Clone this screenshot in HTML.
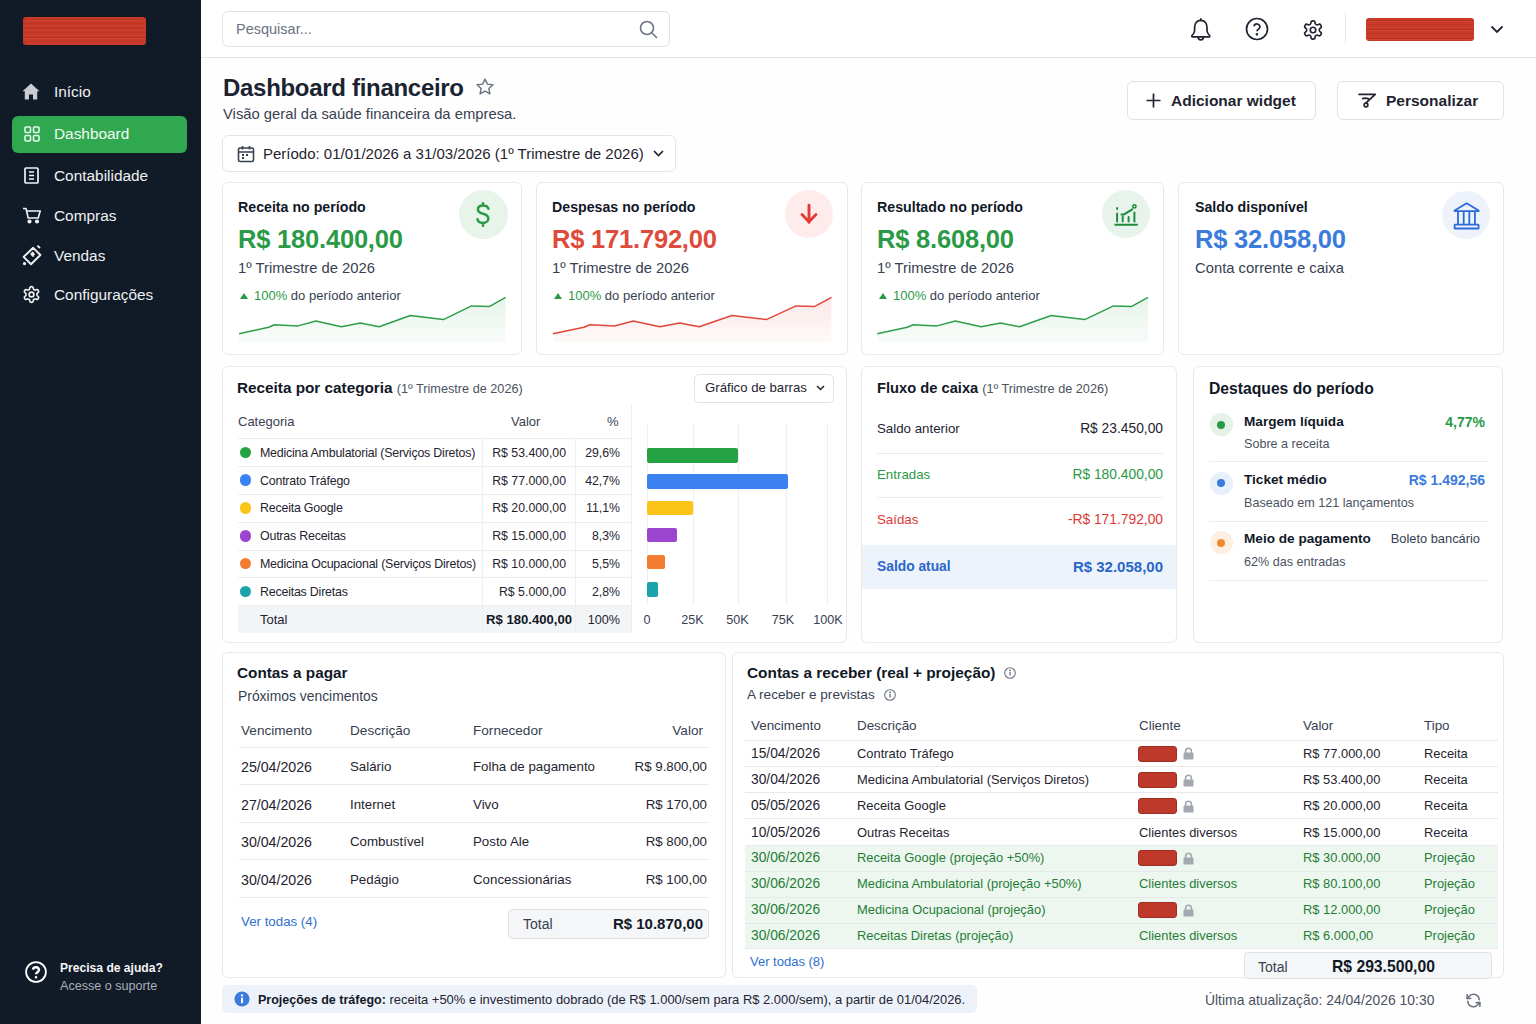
<!DOCTYPE html>
<html><head><meta charset="utf-8">
<style>
*{box-sizing:border-box;margin:0;padding:0}
html,body{width:1536px;height:1024px;overflow:hidden;background:#fefefe;font-family:"Liberation Sans",sans-serif;color:#1f2430}
.a{position:absolute}
.t{position:absolute;white-space:nowrap;line-height:20px}
.b{font-weight:bold}
.card{position:absolute;background:#fff;border:1px solid #e7e8ea;border-radius:6px}
.side{position:absolute;left:0;top:0;width:201px;height:1024px;background:#111a27}
.nav{color:#eef0f3;font-size:15.4px}
.redact{background:repeating-linear-gradient(180deg,#c93b28 0px,#c93b28 1.5px,#b53021 2.5px,#d04530 3.5px,#c23726 4.5px);border-radius:3px}
.rs{border:1px solid #a02d22;border-radius:3px;background:repeating-linear-gradient(180deg,#c23a2a 0px,#b8352a 2px,#c63e2e 3px,#b43327 4px)}
.green{color:#2a9a46}.red{color:#e04a3c}.blue{color:#3a7bdc}
.gray{color:#4b5260}
svg{position:absolute;overflow:visible}
</style></head><body>
<!-- SIDEBAR -->
<div class="side">
  <div class="a redact" style="left:23px;top:17px;width:123px;height:28px"></div>
  <div class="a" style="left:12px;top:116px;width:175px;height:37px;background:#2fa84f;border-radius:6px"></div>
  <!-- icons -->
  <svg style="left:22px;top:83px" width="18" height="17" viewBox="0 0 18 17"><path d="M9 0.5 L17.5 8.2 L15.2 8.2 L15.2 16.5 L11 16.5 L11 11.5 L7 11.5 L7 16.5 L2.8 16.5 L2.8 8.2 L0.5 8.2 Z" fill="#c9ccd3"/></svg>
  <svg style="left:24px;top:126px" width="16" height="16" viewBox="0 0 16 16" fill="none" stroke="#e8f5ea" stroke-width="1.6"><rect x="1" y="1" width="5.5" height="5.5" rx="1"/><rect x="9.5" y="1" width="5.5" height="5.5" rx="1"/><rect x="1" y="9.5" width="5.5" height="5.5" rx="1"/><rect x="9.5" y="9.5" width="5.5" height="5.5" rx="1"/></svg>
  <svg style="left:24px;top:167px" width="15" height="17" viewBox="0 0 15 17" fill="none" stroke="#eef0f3" stroke-width="1.7"><rect x="1" y="1" width="13" height="15" rx="1"/><path d="M5 5h5M5 8.5h5M5 12h5"/></svg>
  <svg style="left:22px;top:207px" width="20" height="17" viewBox="0 0 20 17" fill="none" stroke="#eef0f3" stroke-width="1.6" stroke-linejoin="round"><path d="M1 1.5h3l2.2 9.5h10l2-7H5"/><circle cx="7.5" cy="14.5" r="1.3" fill="#eef0f3"/><circle cx="15" cy="14.5" r="1.3" fill="#eef0f3"/></svg>
  <svg style="left:18px;top:242px" width="30" height="28" viewBox="18 242 30 28" fill="none" stroke="#eef0f3" stroke-width="1.9" stroke-linejoin="round" stroke-linecap="round"><path d="M33.2 247.8L40.4 255L31 264.2L23.6 256.9Z" stroke-linejoin="round"/><path d="M32.5 252.5L34 254.3M31.3 254L33 256"/><path d="M38 246.2L39.5 247.5"/><circle cx="24.5" cy="263.6" r="0.7" fill="#eef0f3"/></svg>
  <svg style="left:22px;top:285px" width="19" height="19" viewBox="0 0 24 24" fill="none" stroke="#eef0f3" stroke-width="2.1"><path d="M12.22 2h-.44a2 2 0 0 0-2 2v.18a2 2 0 0 1-1 1.73l-.43.25a2 2 0 0 1-2 0l-.15-.08a2 2 0 0 0-2.73.73l-.22.38a2 2 0 0 0 .73 2.73l.15.1a2 2 0 0 1 1 1.72v.51a2 2 0 0 1-1 1.74l-.15.09a2 2 0 0 0-.73 2.73l.22.38a2 2 0 0 0 2.73.73l.15-.08a2 2 0 0 1 2 0l.43.25a2 2 0 0 1 1 1.73V20a2 2 0 0 0 2 2h.44a2 2 0 0 0 2-2v-.18a2 2 0 0 1 1-1.73l.43-.25a2 2 0 0 1 2 0l.15.08a2 2 0 0 0 2.73-.73l.22-.39a2 2 0 0 0-.73-2.73l-.15-.08a2 2 0 0 1-1-1.74v-.5a2 2 0 0 1 1-1.74l.15-.09a2 2 0 0 0 .73-2.73l-.22-.38a2 2 0 0 0-2.73-.73l-.15.08a2 2 0 0 1-2 0l-.43-.25a2 2 0 0 1-1-1.73V4a2 2 0 0 0-2-2z"/><circle cx="12" cy="12" r="3"/></svg>
  <div class="t nav" style="left:54px;top:82px">Início</div>
  <div class="t nav" style="left:54px;top:124px;color:#f4fbf5">Dashboard</div>
  <div class="t nav" style="left:54px;top:166px">Contabilidade</div>
  <div class="t nav" style="left:54px;top:206px">Compras</div>
  <div class="t nav" style="left:54px;top:246px">Vendas</div>
  <div class="t nav" style="left:54px;top:285px">Configurações</div>
  <!-- help -->
  <svg style="left:24.5px;top:961px" width="22" height="22" viewBox="0 0 22 22" fill="none" stroke="#fff" stroke-width="1.8"><circle cx="11" cy="11" r="9.9"/><path d="M7.9 8.6a3.1 3.1 0 0 1 6.1.5c0 2-3 2.3-3 4.2" stroke-width="2.4"/><circle cx="11" cy="16.3" r="0.9" fill="#fff" stroke="none"/><circle cx="11" cy="16.3" r="1.2" fill="#fff" stroke="none"/></svg>
  <div class="t b" style="left:60px;top:958px;font-size:12.1px;color:#f3f4f6">Precisa de ajuda?</div>
  <div class="t" style="left:60px;top:976px;font-size:12.6px;color:#a9afb9">Acesse o suporte</div>
</div>
<!-- HEADER -->
<div class="a" style="left:201px;top:0;width:1335px;height:58px;background:#fff;border-bottom:1.5px solid #e3e5e8"></div>
<div class="a" style="left:222px;top:11px;width:448px;height:36px;border:1px solid #dfe2e6;border-radius:6px;background:#fff"></div>
<div class="t" style="left:236px;top:19px;font-size:14.5px;color:#6b7280">Pesquisar...</div>
<svg style="left:639px;top:20px" width="19" height="19" viewBox="0 0 19 19" fill="none" stroke="#6b7280" stroke-width="1.6"><circle cx="8" cy="8" r="6.5"/><path d="M13 13l5 5"/></svg>


<!-- HEADER ICONS -->
<svg style="left:1190px;top:17px" width="22" height="24" viewBox="0 0 22 24" fill="none" stroke="#1f2430" stroke-width="1.7" stroke-linejoin="round" stroke-linecap="round"><path d="M10.8 1.9V3.3"/><path d="M10.8 3.3C6.5 3.3 4.6 6.5 4.6 10.5V13.5C4.6 15.5 3.5 17 2 18.5C1.5 19 1.8 19.8 2.5 19.8H19.1C19.8 19.8 20.1 19 19.6 18.5C18.1 17 17 15.5 17 13.5V10.5C17 6.5 15.1 3.3 10.8 3.3Z"/><path d="M8.2 20.2A2.6 2.6 0 0 0 13.4 20.2"/></svg>
<svg style="left:1245px;top:17px" width="24" height="24" viewBox="0 0 24 24" fill="none" stroke="#1f2430" stroke-width="1.7"><circle cx="12" cy="12" r="10.5"/><path d="M9 9.2a3 3 0 0 1 5.9.7c0 2-3 2.5-3 4.4"/><circle cx="11.9" cy="17.3" r="0.5" fill="#1f2430"/></svg>
<svg style="left:1302px;top:19px" width="22" height="22" viewBox="0 0 24 24" fill="none" stroke="#1f2430" stroke-width="1.8"><path d="M12.22 2h-.44a2 2 0 0 0-2 2v.18a2 2 0 0 1-1 1.73l-.43.25a2 2 0 0 1-2 0l-.15-.08a2 2 0 0 0-2.73.73l-.22.38a2 2 0 0 0 .73 2.73l.15.1a2 2 0 0 1 1 1.72v.51a2 2 0 0 1-1 1.74l-.15.09a2 2 0 0 0-.73 2.73l.22.38a2 2 0 0 0 2.73.73l.15-.08a2 2 0 0 1 2 0l.43.25a2 2 0 0 1 1 1.73V20a2 2 0 0 0 2 2h.44a2 2 0 0 0 2-2v-.18a2 2 0 0 1 1-1.73l.43-.25a2 2 0 0 1 2 0l.15.08a2 2 0 0 0 2.73-.73l.22-.39a2 2 0 0 0-.73-2.73l-.15-.08a2 2 0 0 1-1-1.74v-.5a2 2 0 0 1 1-1.74l.15-.09a2 2 0 0 0 .73-2.73l-.22-.38a2 2 0 0 0-2.73-.73l-.15.08a2 2 0 0 1-2 0l-.43-.25a2 2 0 0 1-1-1.73V4a2 2 0 0 0-2-2z"/><circle cx="12" cy="12" r="3"/></svg>
<div class="a" style="left:1345px;top:13px;width:1px;height:30px;background:#e3e5e8"></div>
<div class="a redact" style="left:1366px;top:18px;width:108px;height:23px"></div>
<svg style="left:1490px;top:25px" width="14" height="9" viewBox="0 0 14 9" fill="none" stroke="#1f2430" stroke-width="1.8"><path d="M1.5 1.5l5.5 5.5 5.5-5.5"/></svg>

<!-- TITLE -->
<div class="t b" style="left:223px;top:77px;font-size:24px;line-height:22px;color:#1b2231;letter-spacing:-0.3px">Dashboard financeiro</div>
<svg style="left:475px;top:77px" width="20" height="20" viewBox="0 0 24 24" fill="none" stroke="#6b7280" stroke-width="1.7" stroke-linejoin="round"><path d="M12 2.5l2.9 6 6.6.8-4.9 4.5 1.3 6.5L12 17l-5.9 3.3 1.3-6.5L2.5 9.3l6.6-.8z"/></svg>
<div class="t" style="left:223px;top:104px;font-size:14.8px;color:#374151">Visão geral da saúde financeira da empresa.</div>
<div class="a" style="left:222px;top:135px;width:454px;height:37px;border:1px solid #e3e5e8;border-radius:6px;background:#fff"></div>
<svg style="left:237px;top:145px" width="18" height="18" viewBox="0 0 18 18" fill="none" stroke="#374151" stroke-width="1.6"><rect x="1.5" y="3" width="15" height="13.5" rx="1.5"/><path d="M1.5 7h15M5.5 1v3.5M12.5 1v3.5"/><path d="M5 10h2M9 10h2M5 13h2" stroke-width="1.8"/></svg>
<div class="t" style="left:263px;top:144px;font-size:15px;color:#1f2430">Período: 01/01/2026 a 31/03/2026 (1º Trimestre de 2026)</div>
<svg style="left:653px;top:150px" width="11" height="7" viewBox="0 0 11 7" fill="none" stroke="#1f2430" stroke-width="1.7"><path d="M1 1l4.5 4.5L10 1"/></svg>

<div class="a" style="left:1127px;top:81px;width:189px;height:39px;border:1px solid #dfe2e6;border-radius:6px;background:#fff"></div>
<svg style="left:1146px;top:93px" width="15" height="15" viewBox="0 0 15 15" fill="none" stroke="#1f2430" stroke-width="1.7"><path d="M7.5 0.5v14M0.5 7.5h14"/></svg>
<div class="t b" style="left:1171px;top:91px;font-size:15.5px;color:#1f2430">Adicionar widget</div>
<div class="a" style="left:1337px;top:81px;width:167px;height:39px;border:1px solid #dfe2e6;border-radius:6px;background:#fff"></div>
<svg style="left:1350px;top:85px" width="35" height="30" viewBox="1350 85 35 30" fill="none" stroke="#1f2430" stroke-width="1.8" stroke-linecap="round" stroke-linejoin="round"><path d="M1359.1 94.4H1375.2L1366 102.8"/><path d="M1362.8 98.6C1364.5 98 1366 98 1368.6 98.8"/><circle cx="1366" cy="105" r="1.9" stroke-width="1.6"/></svg>
<div class="t b" style="left:1386px;top:91px;font-size:15.5px;color:#1f2430">Personalizar</div>
<!-- KPI -->
<div class="card" style="left:222px;top:182px;width:300px;height:173px"></div>
<div class="t b" style="left:238px;top:197px;font-size:14.2px;color:#111827">Receita no período</div>
<div class="t b" style="left:238px;top:228px;font-size:25.5px;line-height:22px;color:#2a9a46;letter-spacing:-0.2px">R$ 180.400,00</div>
<div class="t" style="left:238px;top:258px;font-size:14.8px;color:#374151">1º Trimestre de 2026</div>
<svg style="left:240px;top:293px" width="8" height="6" viewBox="0 0 8 6"><path d="M4 0L8 6H0Z" fill="#2a9a46"/></svg>
<div class="t" style="left:254px;top:286px;font-size:13px;color:#374151"><span style="color:#2a9a46">100%</span> do período anterior</div>
<div class="card" style="left:536px;top:182px;width:312px;height:173px"></div>
<div class="t b" style="left:552px;top:197px;font-size:14.2px;color:#111827">Despesas no período</div>
<div class="t b" style="left:552px;top:228px;font-size:25.5px;line-height:22px;color:#e04a3c;letter-spacing:-0.2px">R$ 171.792,00</div>
<div class="t" style="left:552px;top:258px;font-size:14.8px;color:#374151">1º Trimestre de 2026</div>
<svg style="left:554px;top:293px" width="8" height="6" viewBox="0 0 8 6"><path d="M4 0L8 6H0Z" fill="#2a9a46"/></svg>
<div class="t" style="left:568px;top:286px;font-size:13px;color:#374151"><span style="color:#2a9a46">100%</span> do período anterior</div>
<div class="card" style="left:861px;top:182px;width:303px;height:173px"></div>
<div class="t b" style="left:877px;top:197px;font-size:14.2px;color:#111827">Resultado no período</div>
<div class="t b" style="left:877px;top:228px;font-size:25.5px;line-height:22px;color:#2a9a46;letter-spacing:-0.2px">R$ 8.608,00</div>
<div class="t" style="left:877px;top:258px;font-size:14.8px;color:#374151">1º Trimestre de 2026</div>
<svg style="left:879px;top:293px" width="8" height="6" viewBox="0 0 8 6"><path d="M4 0L8 6H0Z" fill="#2a9a46"/></svg>
<div class="t" style="left:893px;top:286px;font-size:13px;color:#374151"><span style="color:#2a9a46">100%</span> do período anterior</div>
<div class="card" style="left:1178px;top:182px;width:326px;height:173px"></div>
<div class="t b" style="left:1195px;top:197px;font-size:14.2px;color:#111827">Saldo disponível</div>
<div class="t b" style="left:1195px;top:228px;font-size:25.5px;line-height:22px;color:#3a7bdc;letter-spacing:-0.2px">R$ 32.058,00</div>
<div class="t" style="left:1195px;top:258px;font-size:14.8px;color:#374151">Conta corrente e caixa</div>
<div class="a" style="left:459px;top:190px;width:49px;height:49px;border-radius:50%;background:#e7f4ea"></div>
<svg style="left:476px;top:202px" width="14" height="25" viewBox="0 0 14 25" fill="none" stroke="#2a9a46" stroke-width="2.5" stroke-linecap="round"><path d="M12.4 6.8C11.9 4.7 9.9 3.5 7.1 3.5C4 3.5 1.9 5.1 1.9 7.5C1.9 10.1 4.2 11 7 11.7C10 12.4 12.3 13.6 12.3 16.4C12.3 19.1 10 20.9 7 20.9C4.2 20.9 2 19.6 1.5 17.3M7 1.2V3.5M7 20.9V23.8"/></svg>
<div class="a" style="left:785px;top:190px;width:48px;height:48px;border-radius:50%;background:#fdeceb"></div>
<svg style="left:800px;top:203px" width="18" height="22" viewBox="0 0 18 22" fill="none" stroke="#e33b35" stroke-width="2.9" stroke-linecap="round" stroke-linejoin="round"><path d="M9 2.2v17.2M2 11.5L9 18.8l7-7.3"/></svg>
<div class="a" style="left:1102px;top:190px;width:48px;height:48px;border-radius:50%;background:#e8f4eb"></div>
<svg style="left:1100px;top:190px" width="52" height="50" viewBox="1100 190 52 50" fill="none" stroke="#1f8c3d" stroke-width="2" stroke-linecap="round"><path d="M1117.1 213.5V221.5M1122.7 216.5V221.5M1128.6 217V221.5M1134.4 212.5V221.5M1115.3 224.7H1137"/><path d="M1117.1 208V209"/><path d="M1121.5 214.6L1124 214.4L1132.2 209.3"/><circle cx="1134.4" cy="206.4" r="1.6" stroke-width="1.6"/></svg>
<div class="a" style="left:1442px;top:191px;width:48px;height:48px;border-radius:50%;background:#edf2fb"></div>
<svg style="left:1440px;top:190px" width="52" height="50" viewBox="1440 190 52 50" fill="none" stroke="#2f6bd8" stroke-width="1.8" stroke-linejoin="round"><path d="M1466.6 203.3L1478.6 210.6V211.2H1454.6V210.6Z"/><path d="M1458 211.5V224.6M1463.7 211.5V224.6M1469.3 211.5V224.6M1474.9 211.5V224.6"/><rect x="1454.6" y="224.7" width="24" height="3.8" rx="0.6"/></svg>
<svg style="left:237px;top:290px" width="272" height="56" viewBox="0 0 272 56"><defs><linearGradient id="ga" x1="0" y1="0" x2="0" y2="1"><stop offset="0" stop-color="#2e9e4a" stop-opacity="0.12"/><stop offset="1" stop-color="#2e9e4a" stop-opacity="0.03"/></linearGradient></defs><path d="M2.1 43.8 L31.7 37.2 L37.4 34.7 L61.0 35.9 L78.9 31.0 L104.4 36.8 L123.3 32.9 L142.1 36.8 L173.3 25.5 L206.3 29.6 L234.6 15.9 L252.6 16.4 L268.6 7.4 L268.6 52.30000000000001 L2.1 52.30000000000001 Z" fill="url(#ga)"/><path d="M2.1 43.8 L31.7 37.2 L37.4 34.7 L61.0 35.9 L78.9 31.0 L104.4 36.8 L123.3 32.9 L142.1 36.8 L173.3 25.5 L206.3 29.6 L234.6 15.9 L252.6 16.4 L268.6 7.4" fill="none" stroke="#2e9e4a" stroke-width="1.5" stroke-linejoin="round"/></svg>
<svg style="left:551px;top:290px" width="284" height="56" viewBox="0 0 284 56"><defs><linearGradient id="gb" x1="0" y1="0" x2="0" y2="1"><stop offset="0" stop-color="#e0473b" stop-opacity="0.12"/><stop offset="1" stop-color="#e0473b" stop-opacity="0.03"/></linearGradient></defs><path d="M2.0 43.8 L32.9 37.2 L38.9 34.7 L63.6 35.9 L82.3 31.0 L108.9 36.8 L128.7 32.9 L148.3 36.8 L180.9 25.5 L215.4 29.6 L245.0 15.9 L263.8 16.4 L280.5 7.4 L280.5 52.30000000000001 L2.0 52.30000000000001 Z" fill="url(#gb)"/><path d="M2.0 43.8 L32.9 37.2 L38.9 34.7 L63.6 35.9 L82.3 31.0 L108.9 36.8 L128.7 32.9 L148.3 36.8 L180.9 25.5 L215.4 29.6 L245.0 15.9 L263.8 16.4 L280.5 7.4" fill="none" stroke="#e0473b" stroke-width="1.5" stroke-linejoin="round"/></svg>
<svg style="left:875px;top:290px" width="276" height="56" viewBox="0 0 276 56"><defs><linearGradient id="gc" x1="0" y1="0" x2="0" y2="1"><stop offset="0" stop-color="#2e9e4a" stop-opacity="0.12"/><stop offset="1" stop-color="#2e9e4a" stop-opacity="0.03"/></linearGradient></defs><path d="M2.2 43.8 L32.3 37.2 L38.1 34.7 L62.1 35.9 L80.2 31.0 L106.2 36.8 L125.4 32.9 L144.5 36.8 L176.2 25.5 L209.7 29.6 L238.5 15.9 L256.7 16.4 L273.0 7.4 L273.0 52.30000000000001 L2.2 52.30000000000001 Z" fill="url(#gc)"/><path d="M2.2 43.8 L32.3 37.2 L38.1 34.7 L62.1 35.9 L80.2 31.0 L106.2 36.8 L125.4 32.9 L144.5 36.8 L176.2 25.5 L209.7 29.6 L238.5 15.9 L256.7 16.4 L273.0 7.4" fill="none" stroke="#2e9e4a" stroke-width="1.5" stroke-linejoin="round"/></svg>
<!-- ROW2 -->
<div class="card" style="left:222px;top:366px;width:625px;height:277px"></div>
<div class="t b" style="left:237px;top:378.3px;font-size:15.3px;color:#111827">Receita por categoria <span style="font-weight:normal;font-size:12.7px;color:#4b5260">(1º Trimestre de 2026)</span></div>
<div class="a" style="left:694px;top:374px;width:140px;height:29px;border:1px solid #dfe2e6;border-radius:5px;background:#fff"></div>
<div class="t" style="left:705px;top:378px;font-size:13.2px;color:#1f2430">Gráfico de barras</div>
<svg style="left:816px;top:385px" width="9" height="6" viewBox="0 0 9 6" fill="none" stroke="#1f2430" stroke-width="1.5"><path d="M1 1l3.5 3.5L8 1"/></svg>
<div class="a" style="left:631px;top:404px;width:1px;height:229px;background:#eceef0"></div>
<div class="a" style="left:238px;top:605px;width:393px;height:28px;background:#f3f4f6;border-radius:0 0 3px 3px"></div>
<div class="t" style="left:238px;top:411.7px;font-size:13px;color:#374151">Categoria</div>
<div class="t" style="left:511px;top:411.7px;font-size:13px;color:#374151">Valor</div>
<div class="t" style="left:607px;top:411.7px;font-size:13px;color:#374151">%</div>
<div class="a" style="left:238px;top:438px;width:393px;height:1px;background:#eceef0"></div>
<div class="a" style="left:238px;top:466px;width:393px;height:1px;background:#eceef0"></div>
<div class="a" style="left:238px;top:494px;width:393px;height:1px;background:#eceef0"></div>
<div class="a" style="left:238px;top:522px;width:393px;height:1px;background:#eceef0"></div>
<div class="a" style="left:238px;top:550px;width:393px;height:1px;background:#eceef0"></div>
<div class="a" style="left:238px;top:577px;width:393px;height:1px;background:#eceef0"></div>
<div class="a" style="left:238px;top:605px;width:393px;height:1px;background:#eceef0"></div>
<div class="a" style="left:482px;top:438px;width:1px;height:195px;background:#eceef0"></div>
<div class="a" style="left:575px;top:438px;width:1px;height:195px;background:#eceef0"></div>
<div class="a" style="left:239.5px;top:446.6px;width:11.5px;height:11.5px;border-radius:50%;background:#25a244"></div>
<div class="t" style="left:260px;top:442.8px;font-size:12.4px;color:#1f2430;letter-spacing:-0.2px">Medicina Ambulatorial (Serviços Diretos)</div>
<div class="t" style="left:476px;width:90px;text-align:right;top:442.8px;font-size:12.3px;color:#1f2430">R$ 53.400,00</div>
<div class="t" style="left:560px;width:60px;text-align:right;top:442.8px;font-size:12.3px;color:#1f2430">29,6%</div>
<div class="a" style="left:239.5px;top:474.4px;width:11.5px;height:11.5px;border-radius:50%;background:#3b82f0"></div>
<div class="t" style="left:260px;top:470.6px;font-size:12.4px;color:#1f2430;letter-spacing:-0.2px">Contrato Tráfego</div>
<div class="t" style="left:476px;width:90px;text-align:right;top:470.6px;font-size:12.3px;color:#1f2430">R$ 77.000,00</div>
<div class="t" style="left:560px;width:60px;text-align:right;top:470.6px;font-size:12.3px;color:#1f2430">42,7%</div>
<div class="a" style="left:239.5px;top:502.2px;width:11.5px;height:11.5px;border-radius:50%;background:#fcc419"></div>
<div class="t" style="left:260px;top:498.4px;font-size:12.4px;color:#1f2430;letter-spacing:-0.2px">Receita Google</div>
<div class="t" style="left:476px;width:90px;text-align:right;top:498.4px;font-size:12.3px;color:#1f2430">R$ 20.000,00</div>
<div class="t" style="left:560px;width:60px;text-align:right;top:498.4px;font-size:12.3px;color:#1f2430">11,1%</div>
<div class="a" style="left:239.5px;top:530.0px;width:11.5px;height:11.5px;border-radius:50%;background:#9b45d1"></div>
<div class="t" style="left:260px;top:526.2px;font-size:12.4px;color:#1f2430;letter-spacing:-0.2px">Outras Receitas</div>
<div class="t" style="left:476px;width:90px;text-align:right;top:526.2px;font-size:12.3px;color:#1f2430">R$ 15.000,00</div>
<div class="t" style="left:560px;width:60px;text-align:right;top:526.2px;font-size:12.3px;color:#1f2430">8,3%</div>
<div class="a" style="left:239.5px;top:557.8px;width:11.5px;height:11.5px;border-radius:50%;background:#f47c30"></div>
<div class="t" style="left:260px;top:554.0px;font-size:12.4px;color:#1f2430;letter-spacing:-0.2px">Medicina Ocupacional (Serviços Diretos)</div>
<div class="t" style="left:476px;width:90px;text-align:right;top:554.0px;font-size:12.3px;color:#1f2430">R$ 10.000,00</div>
<div class="t" style="left:560px;width:60px;text-align:right;top:554.0px;font-size:12.3px;color:#1f2430">5,5%</div>
<div class="a" style="left:239.5px;top:585.6px;width:11.5px;height:11.5px;border-radius:50%;background:#1aa3a8"></div>
<div class="t" style="left:260px;top:581.8px;font-size:12.4px;color:#1f2430;letter-spacing:-0.2px">Receitas Diretas</div>
<div class="t" style="left:476px;width:90px;text-align:right;top:581.8px;font-size:12.3px;color:#1f2430">R$ 5.000,00</div>
<div class="t" style="left:560px;width:60px;text-align:right;top:581.8px;font-size:12.3px;color:#1f2430">2,8%</div>
<div class="t" style="left:260px;top:610.2px;font-size:13px;color:#1f2430">Total</div>
<div class="t b" style="left:470px;width:102px;text-align:right;top:610.2px;font-size:13.1px;color:#111827">R$ 180.400,00</div>
<div class="t" style="left:560px;width:60px;text-align:right;top:610.2px;font-size:12.6px;color:#1f2430">100%</div>
<div class="a" style="left:647px;top:424px;width:1px;height:181px;background:#eceef0"></div>
<div class="a" style="left:692.5px;top:424px;width:1px;height:181px;background:#eceef0"></div>
<div class="a" style="left:737.5px;top:424px;width:1px;height:181px;background:#eceef0"></div>
<div class="a" style="left:786px;top:424px;width:1px;height:181px;background:#eceef0"></div>
<div class="a" style="left:827px;top:424px;width:1px;height:181px;background:#eceef0"></div>
<div class="a" style="left:647px;top:448px;width:90.5px;height:14.5px;background:#25a244;border-radius:2px"></div>
<div class="a" style="left:647px;top:474.2px;width:141px;height:14.5px;background:#3b82f0;border-radius:2px"></div>
<div class="a" style="left:647px;top:500.7px;width:46px;height:14.5px;background:#fcc419;border-radius:2px"></div>
<div class="a" style="left:647px;top:527.5px;width:30px;height:14.5px;background:#9b45d1;border-radius:2px"></div>
<div class="a" style="left:647px;top:554.6px;width:18px;height:14.5px;background:#f47c30;border-radius:2px"></div>
<div class="a" style="left:647px;top:582px;width:11px;height:14.5px;background:#1aa3a8;border-radius:2px"></div>
<div class="t" style="left:617px;width:60px;text-align:center;top:610px;font-size:12.6px;color:#374151">0</div>
<div class="t" style="left:662.5px;width:60px;text-align:center;top:610px;font-size:12.6px;color:#374151">25K</div>
<div class="t" style="left:707.5px;width:60px;text-align:center;top:610px;font-size:12.6px;color:#374151">50K</div>
<div class="t" style="left:753px;width:60px;text-align:center;top:610px;font-size:12.6px;color:#374151">75K</div>
<div class="t" style="left:798px;width:60px;text-align:center;top:610px;font-size:12.6px;color:#374151">100K</div>
<div class="card" style="left:861px;top:366px;width:316px;height:277px"></div>
<div class="a" style="left:862px;top:545px;width:314px;height:44px;background:#edf3fb"></div>
<div class="t b" style="left:877px;top:378.3px;font-size:14.7px;color:#111827">Fluxo de caixa <span style="font-weight:normal;font-size:12.7px;color:#4b5260">(1º Trimestre de 2026)</span></div>
<div class="t " style="left:877px;top:418.7px;font-size:13.3px;color:#1f2430">Saldo anterior</div>
<div class="t " style="left:1000px;width:163px;text-align:right;top:418.7px;font-size:13.8px;color:#1f2430">R$ 23.450,00</div>
<div class="t " style="left:877px;top:465.4px;font-size:13.3px;color:#2a9a46">Entradas</div>
<div class="t " style="left:1000px;width:163px;text-align:right;top:465.4px;font-size:13.8px;color:#2a9a46">R$ 180.400,00</div>
<div class="t " style="left:877px;top:509.90000000000003px;font-size:13.3px;color:#dc3a34">Saídas</div>
<div class="t " style="left:1000px;width:163px;text-align:right;top:509.90000000000003px;font-size:13.8px;color:#dc3a34">-R$ 171.792,00</div>
<div class="t b" style="left:877px;top:557px;font-size:13.8px;color:#2a66c8">Saldo atual</div>
<div class="t b" style="left:1000px;width:163px;text-align:right;top:557px;font-size:15px;color:#2a66c8">R$ 32.058,00</div>
<div class="a" style="left:877px;top:453px;width:286px;height:1px;background:#e8eaed"></div>
<div class="a" style="left:877px;top:497px;width:286px;height:1px;background:#e8eaed"></div>
<div class="card" style="left:1193px;top:366px;width:310px;height:277px"></div>
<div class="t b" style="left:1209px;top:378.5px;font-size:15.7px;color:#111827">Destaques do período</div>
<div class="a" style="left:1209.5px;top:413.1px;width:23px;height:23px;border-radius:50%;background:#e5f2e8"></div>
<div class="a" style="left:1217px;top:420.6px;width:8px;height:8px;border-radius:50%;background:#2a9a46"></div>
<div class="t b" style="left:1244px;top:411.8px;font-size:13.6px;color:#111827">Margem líquida</div>
<div class="t" style="left:1244px;top:433.8px;font-size:12.6px;color:#4b5260">Sobre a receita</div>
<div class="t b" style="left:1300px;width:185px;text-align:right;top:411.8px;font-size:14px;color:#2a9a46">4,77%</div>
<div class="a" style="left:1209.5px;top:471.7px;width:23px;height:23px;border-radius:50%;background:#e8f0fb"></div>
<div class="a" style="left:1217px;top:479.2px;width:8px;height:8px;border-radius:50%;background:#3a7bdc"></div>
<div class="t b" style="left:1244px;top:470.4px;font-size:13.6px;color:#111827">Ticket médio</div>
<div class="t" style="left:1244px;top:493.0px;font-size:12.6px;color:#4b5260">Baseado em 121 lançamentos</div>
<div class="t b" style="left:1300px;width:185px;text-align:right;top:470.4px;font-size:14px;color:#3a7bdc">R$ 1.492,56</div>
<div class="a" style="left:1209.5px;top:531.2px;width:23px;height:23px;border-radius:50%;background:#fdefe2"></div>
<div class="a" style="left:1217px;top:538.7px;width:8px;height:8px;border-radius:50%;background:#f08a2e"></div>
<div class="t b" style="left:1244px;top:529.3px;font-size:13.6px;color:#111827">Meio de pagamento</div>
<div class="t" style="left:1244px;top:551.8px;font-size:12.6px;color:#4b5260">62% das entradas</div>
<div class="t" style="left:1300px;width:180px;text-align:right;top:529.3px;font-size:12.85px;color:#374151">Boleto bancário</div>
<div class="a" style="left:1209px;top:461px;width:279px;height:1px;background:#eceef0"></div>
<div class="a" style="left:1209px;top:521px;width:279px;height:1px;background:#eceef0"></div>
<div class="a" style="left:1209px;top:580px;width:279px;height:1px;background:#eceef0"></div>
<!-- ROW3 -->
<div class="card" style="left:222px;top:652px;width:504px;height:326px"></div>
<div class="t b" style="left:237px;top:663px;font-size:15.3px;color:#111827">Contas a pagar</div>
<div class="t" style="left:238px;top:686px;font-size:13.9px;color:#374151">Próximos vencimentos</div>
<div class="t" style="left:241px;top:721px;font-size:13.6px;color:#374151">Vencimento</div>
<div class="t" style="left:350px;top:721px;font-size:13.6px;color:#374151">Descrição</div>
<div class="t" style="left:473px;top:721px;font-size:13.6px;color:#374151">Fornecedor</div>
<div class="t" style="left:600px;width:103px;text-align:right;top:721px;font-size:13.6px;color:#374151">Valor</div>
<div class="a" style="left:239px;top:747px;width:470px;height:1px;background:#e8eaed"></div>
<div class="a" style="left:239px;top:784px;width:470px;height:1px;background:#e8eaed"></div>
<div class="a" style="left:239px;top:822px;width:470px;height:1px;background:#e8eaed"></div>
<div class="a" style="left:239px;top:859px;width:470px;height:1px;background:#e8eaed"></div>
<div class="a" style="left:239px;top:897px;width:470px;height:1px;background:#e8eaed"></div>
<div class="t" style="left:241px;top:757.2px;font-size:14.2px;color:#1f2430">25/04/2026</div>
<div class="t" style="left:350px;top:757.2px;font-size:13.3px;color:#1f2430">Salário</div>
<div class="t" style="left:473px;top:757.2px;font-size:13.3px;color:#1f2430">Folha de pagamento</div>
<div class="t" style="left:580px;width:127px;text-align:right;top:757.2px;font-size:13.3px;color:#1f2430">R$ 9.800,00</div>
<div class="t" style="left:241px;top:795.1px;font-size:14.2px;color:#1f2430">27/04/2026</div>
<div class="t" style="left:350px;top:795.1px;font-size:13.3px;color:#1f2430">Internet</div>
<div class="t" style="left:473px;top:795.1px;font-size:13.3px;color:#1f2430">Vivo</div>
<div class="t" style="left:580px;width:127px;text-align:right;top:795.1px;font-size:13.3px;color:#1f2430">R$ 170,00</div>
<div class="t" style="left:241px;top:832.3px;font-size:14.2px;color:#1f2430">30/04/2026</div>
<div class="t" style="left:350px;top:832.3px;font-size:13.3px;color:#1f2430">Combustível</div>
<div class="t" style="left:473px;top:832.3px;font-size:13.3px;color:#1f2430">Posto Ale</div>
<div class="t" style="left:580px;width:127px;text-align:right;top:832.3px;font-size:13.3px;color:#1f2430">R$ 800,00</div>
<div class="t" style="left:241px;top:869.6px;font-size:14.2px;color:#1f2430">30/04/2026</div>
<div class="t" style="left:350px;top:869.6px;font-size:13.3px;color:#1f2430">Pedágio</div>
<div class="t" style="left:473px;top:869.6px;font-size:13.3px;color:#1f2430">Concessionárias</div>
<div class="t" style="left:580px;width:127px;text-align:right;top:869.6px;font-size:13.3px;color:#1f2430">R$ 100,00</div>
<div class="t" style="left:241px;top:912px;font-size:13.3px;color:#2f6fd0">Ver todas (4)</div>
<div class="a" style="left:508px;top:909px;width:201px;height:30px;background:#f5f6f7;border:1px solid #dfe2e5;border-radius:4px"></div>
<div class="t" style="left:523px;top:914px;font-size:14px;color:#374151">Total</div>
<div class="t b" style="left:580px;width:123px;text-align:right;top:914px;font-size:15px;color:#111827">R$ 10.870,00</div>
<div class="card" style="left:732px;top:652px;width:772px;height:326px"></div>
<div class="a" style="left:745px;top:845px;width:753px;height:103px;background:#eef7ef"></div>
<div class="t b" style="left:747px;top:663px;font-size:15.4px;color:#111827">Contas a receber (real + projeção)</div>
<svg style="left:1004px;top:667px" width="12" height="12" viewBox="0 0 12 12" fill="none" stroke="#6b7280" stroke-width="1.1"><circle cx="6" cy="6" r="5.3"/><path d="M6 5v3.6" stroke-width="1.3"/><circle cx="6" cy="3.4" r="0.4" fill="#6b7280"/></svg>
<div class="t" style="left:747px;top:685px;font-size:13.6px;color:#374151">A receber e previstas</div>
<svg style="left:884px;top:689px" width="12" height="12" viewBox="0 0 12 12" fill="none" stroke="#6b7280" stroke-width="1.1"><circle cx="6" cy="6" r="5.3"/><path d="M6 5v3.6" stroke-width="1.3"/><circle cx="6" cy="3.4" r="0.4" fill="#6b7280"/></svg>
<div class="t" style="left:751px;top:716px;font-size:13.4px;color:#374151">Vencimento</div>
<div class="t" style="left:857px;top:716px;font-size:13.4px;color:#374151">Descrição</div>
<div class="t" style="left:1139px;top:716px;font-size:13.4px;color:#374151">Cliente</div>
<div class="t" style="left:1303px;top:716px;font-size:13.4px;color:#374151">Valor</div>
<div class="t" style="left:1424px;top:716px;font-size:13.4px;color:#374151">Tipo</div>
<div class="a" style="left:745px;top:740px;width:753px;height:1px;background:#e6e8eb"></div>
<div class="a" style="left:745px;top:766px;width:753px;height:1px;background:#e6e8eb"></div>
<div class="a" style="left:745px;top:792px;width:753px;height:1px;background:#e6e8eb"></div>
<div class="a" style="left:745px;top:818px;width:753px;height:1px;background:#e6e8eb"></div>
<div class="a" style="left:745px;top:845px;width:753px;height:1px;background:#e6e8eb"></div>
<div class="a" style="left:745px;top:870.8px;width:753px;height:1px;background:#e6e8eb"></div>
<div class="a" style="left:745px;top:896.7px;width:753px;height:1px;background:#e6e8eb"></div>
<div class="a" style="left:745px;top:922.6px;width:753px;height:1px;background:#e6e8eb"></div>
<div class="a" style="left:745px;top:947.9px;width:753px;height:1px;background:#e6e8eb"></div>
<div class="t" style="left:751px;top:743.6px;font-size:13.8px;color:#1f2430">15/04/2026</div>
<div class="t" style="left:857px;top:743.6px;font-size:12.9px;color:#1f2430">Contrato Tráfego</div>
<div class="a redact rs" style="left:1138px;top:745.6px;width:39px;height:16px"></div>
<svg style="left:1183px;top:747.1px" width="11" height="13" viewBox="0 0 11 13"><path d="M2.6 6V4.2a2.9 2.9 0 0 1 5.8 0V6" fill="none" stroke="#a3a8b1" stroke-width="1.6"/><rect x="0.5" y="5.6" width="10" height="7" rx="1.2" fill="#a3a8b1"/></svg>
<div class="t" style="left:1303px;top:743.6px;font-size:12.9px;color:#1f2430">R$ 77.000,00</div>
<div class="t" style="left:1424px;top:743.6px;font-size:12.9px;color:#1f2430">Receita</div>
<div class="t" style="left:751px;top:770.2px;font-size:13.8px;color:#1f2430">30/04/2026</div>
<div class="t" style="left:857px;top:770.2px;font-size:12.9px;color:#1f2430">Medicina Ambulatorial (Serviços Diretos)</div>
<div class="a redact rs" style="left:1138px;top:772.2px;width:39px;height:16px"></div>
<svg style="left:1183px;top:773.7px" width="11" height="13" viewBox="0 0 11 13"><path d="M2.6 6V4.2a2.9 2.9 0 0 1 5.8 0V6" fill="none" stroke="#a3a8b1" stroke-width="1.6"/><rect x="0.5" y="5.6" width="10" height="7" rx="1.2" fill="#a3a8b1"/></svg>
<div class="t" style="left:1303px;top:770.2px;font-size:12.9px;color:#1f2430">R$ 53.400,00</div>
<div class="t" style="left:1424px;top:770.2px;font-size:12.9px;color:#1f2430">Receita</div>
<div class="t" style="left:751px;top:796.1px;font-size:13.8px;color:#1f2430">05/05/2026</div>
<div class="t" style="left:857px;top:796.1px;font-size:12.9px;color:#1f2430">Receita Google</div>
<div class="a redact rs" style="left:1138px;top:798.1px;width:39px;height:16px"></div>
<svg style="left:1183px;top:799.6px" width="11" height="13" viewBox="0 0 11 13"><path d="M2.6 6V4.2a2.9 2.9 0 0 1 5.8 0V6" fill="none" stroke="#a3a8b1" stroke-width="1.6"/><rect x="0.5" y="5.6" width="10" height="7" rx="1.2" fill="#a3a8b1"/></svg>
<div class="t" style="left:1303px;top:796.1px;font-size:12.9px;color:#1f2430">R$ 20.000,00</div>
<div class="t" style="left:1424px;top:796.1px;font-size:12.9px;color:#1f2430">Receita</div>
<div class="t" style="left:751px;top:822.6px;font-size:13.8px;color:#1f2430">10/05/2026</div>
<div class="t" style="left:857px;top:822.6px;font-size:12.9px;color:#1f2430">Outras Receitas</div>
<div class="t" style="left:1139px;top:822.6px;font-size:12.9px;color:#1f2430">Clientes diversos</div>
<div class="t" style="left:1303px;top:822.6px;font-size:12.9px;color:#1f2430">R$ 15.000,00</div>
<div class="t" style="left:1424px;top:822.6px;font-size:12.9px;color:#1f2430">Receita</div>
<div class="t" style="left:751px;top:848.2px;font-size:13.8px;color:#1f7d37">30/06/2026</div>
<div class="t" style="left:857px;top:848.2px;font-size:12.9px;color:#1f7d37">Receita Google (projeção +50%)</div>
<div class="a redact rs" style="left:1138px;top:850.2px;width:39px;height:16px"></div>
<svg style="left:1183px;top:851.7px" width="11" height="13" viewBox="0 0 11 13"><path d="M2.6 6V4.2a2.9 2.9 0 0 1 5.8 0V6" fill="none" stroke="#a3a8b1" stroke-width="1.6"/><rect x="0.5" y="5.6" width="10" height="7" rx="1.2" fill="#a3a8b1"/></svg>
<div class="t" style="left:1303px;top:848.2px;font-size:12.9px;color:#1f7d37">R$ 30.000,00</div>
<div class="t" style="left:1424px;top:848.2px;font-size:12.9px;color:#1f7d37">Projeção</div>
<div class="t" style="left:751px;top:874.1px;font-size:13.8px;color:#1f7d37">30/06/2026</div>
<div class="t" style="left:857px;top:874.1px;font-size:12.9px;color:#1f7d37">Medicina Ambulatorial (projeção +50%)</div>
<div class="t" style="left:1139px;top:874.1px;font-size:12.9px;color:#1f7d37">Clientes diversos</div>
<div class="t" style="left:1303px;top:874.1px;font-size:12.9px;color:#1f7d37">R$ 80.100,00</div>
<div class="t" style="left:1424px;top:874.1px;font-size:12.9px;color:#1f7d37">Projeção</div>
<div class="t" style="left:751px;top:900px;font-size:13.8px;color:#1f7d37">30/06/2026</div>
<div class="t" style="left:857px;top:900px;font-size:12.9px;color:#1f7d37">Medicina Ocupacional (projeção)</div>
<div class="a redact rs" style="left:1138px;top:902px;width:39px;height:16px"></div>
<svg style="left:1183px;top:903.5px" width="11" height="13" viewBox="0 0 11 13"><path d="M2.6 6V4.2a2.9 2.9 0 0 1 5.8 0V6" fill="none" stroke="#a3a8b1" stroke-width="1.6"/><rect x="0.5" y="5.6" width="10" height="7" rx="1.2" fill="#a3a8b1"/></svg>
<div class="t" style="left:1303px;top:900px;font-size:12.9px;color:#1f7d37">R$ 12.000,00</div>
<div class="t" style="left:1424px;top:900px;font-size:12.9px;color:#1f7d37">Projeção</div>
<div class="t" style="left:751px;top:925.6px;font-size:13.8px;color:#1f7d37">30/06/2026</div>
<div class="t" style="left:857px;top:925.6px;font-size:12.9px;color:#1f7d37">Receitas Diretas (projeção)</div>
<div class="t" style="left:1139px;top:925.6px;font-size:12.9px;color:#1f7d37">Clientes diversos</div>
<div class="t" style="left:1303px;top:925.6px;font-size:12.9px;color:#1f7d37">R$ 6.000,00</div>
<div class="t" style="left:1424px;top:925.6px;font-size:12.9px;color:#1f7d37">Projeção</div>
<div class="t" style="left:750px;top:952px;font-size:13px;color:#2f6fd0">Ver todas (8)</div>
<div class="a" style="left:1244px;top:952px;width:248px;height:26.5px;background:#f5f6f7;border:1px solid #dfe2e5;border-radius:4px"></div>
<div class="t" style="left:1258px;top:956.5px;font-size:14px;color:#374151">Total</div>
<div class="t b" style="left:1332px;top:956.5px;font-size:15.7px;color:#111827">R$ 293.500,00</div>
<div class="a" style="left:222px;top:985px;width:755px;height:28px;background:#edf2fa;border-radius:5px"></div>
<svg style="left:234px;top:991px" width="16" height="16" viewBox="0 0 16 16"><circle cx="8" cy="8" r="7.6" fill="#3a7bdc"/><rect x="7" y="6.6" width="2" height="5.6" rx="0.6" fill="#fff"/><circle cx="8" cy="4.4" r="1.1" fill="#fff"/></svg>
<div class="t" style="left:258px;top:989.5px;font-size:12.95px;color:#1f2430"><b style="color:#111827;font-size:12.5px">Projeções de tráfego:</b> receita +50% e investimento dobrado (de R$ 1.000/sem para R$ 2.000/sem), a partir de 01/04/2026.</div>
<div class="t" style="left:1205px;top:990px;font-size:13.9px;color:#4b5260">Última atualização: 24/04/2026 10:30</div>
<svg style="left:1465px;top:992px" width="17" height="17" viewBox="0 0 24 24" fill="none" stroke="#6b7280" stroke-width="2.2" stroke-linecap="round" stroke-linejoin="round"><path d="M20 11a8 8 0 0 0-14.5-4.5L3 9"/><path d="M3 4v5h5"/><path d="M4 13a8 8 0 0 0 14.5 4.5L21 15"/><path d="M21 20v-5h-5"/></svg>
</body></html>
